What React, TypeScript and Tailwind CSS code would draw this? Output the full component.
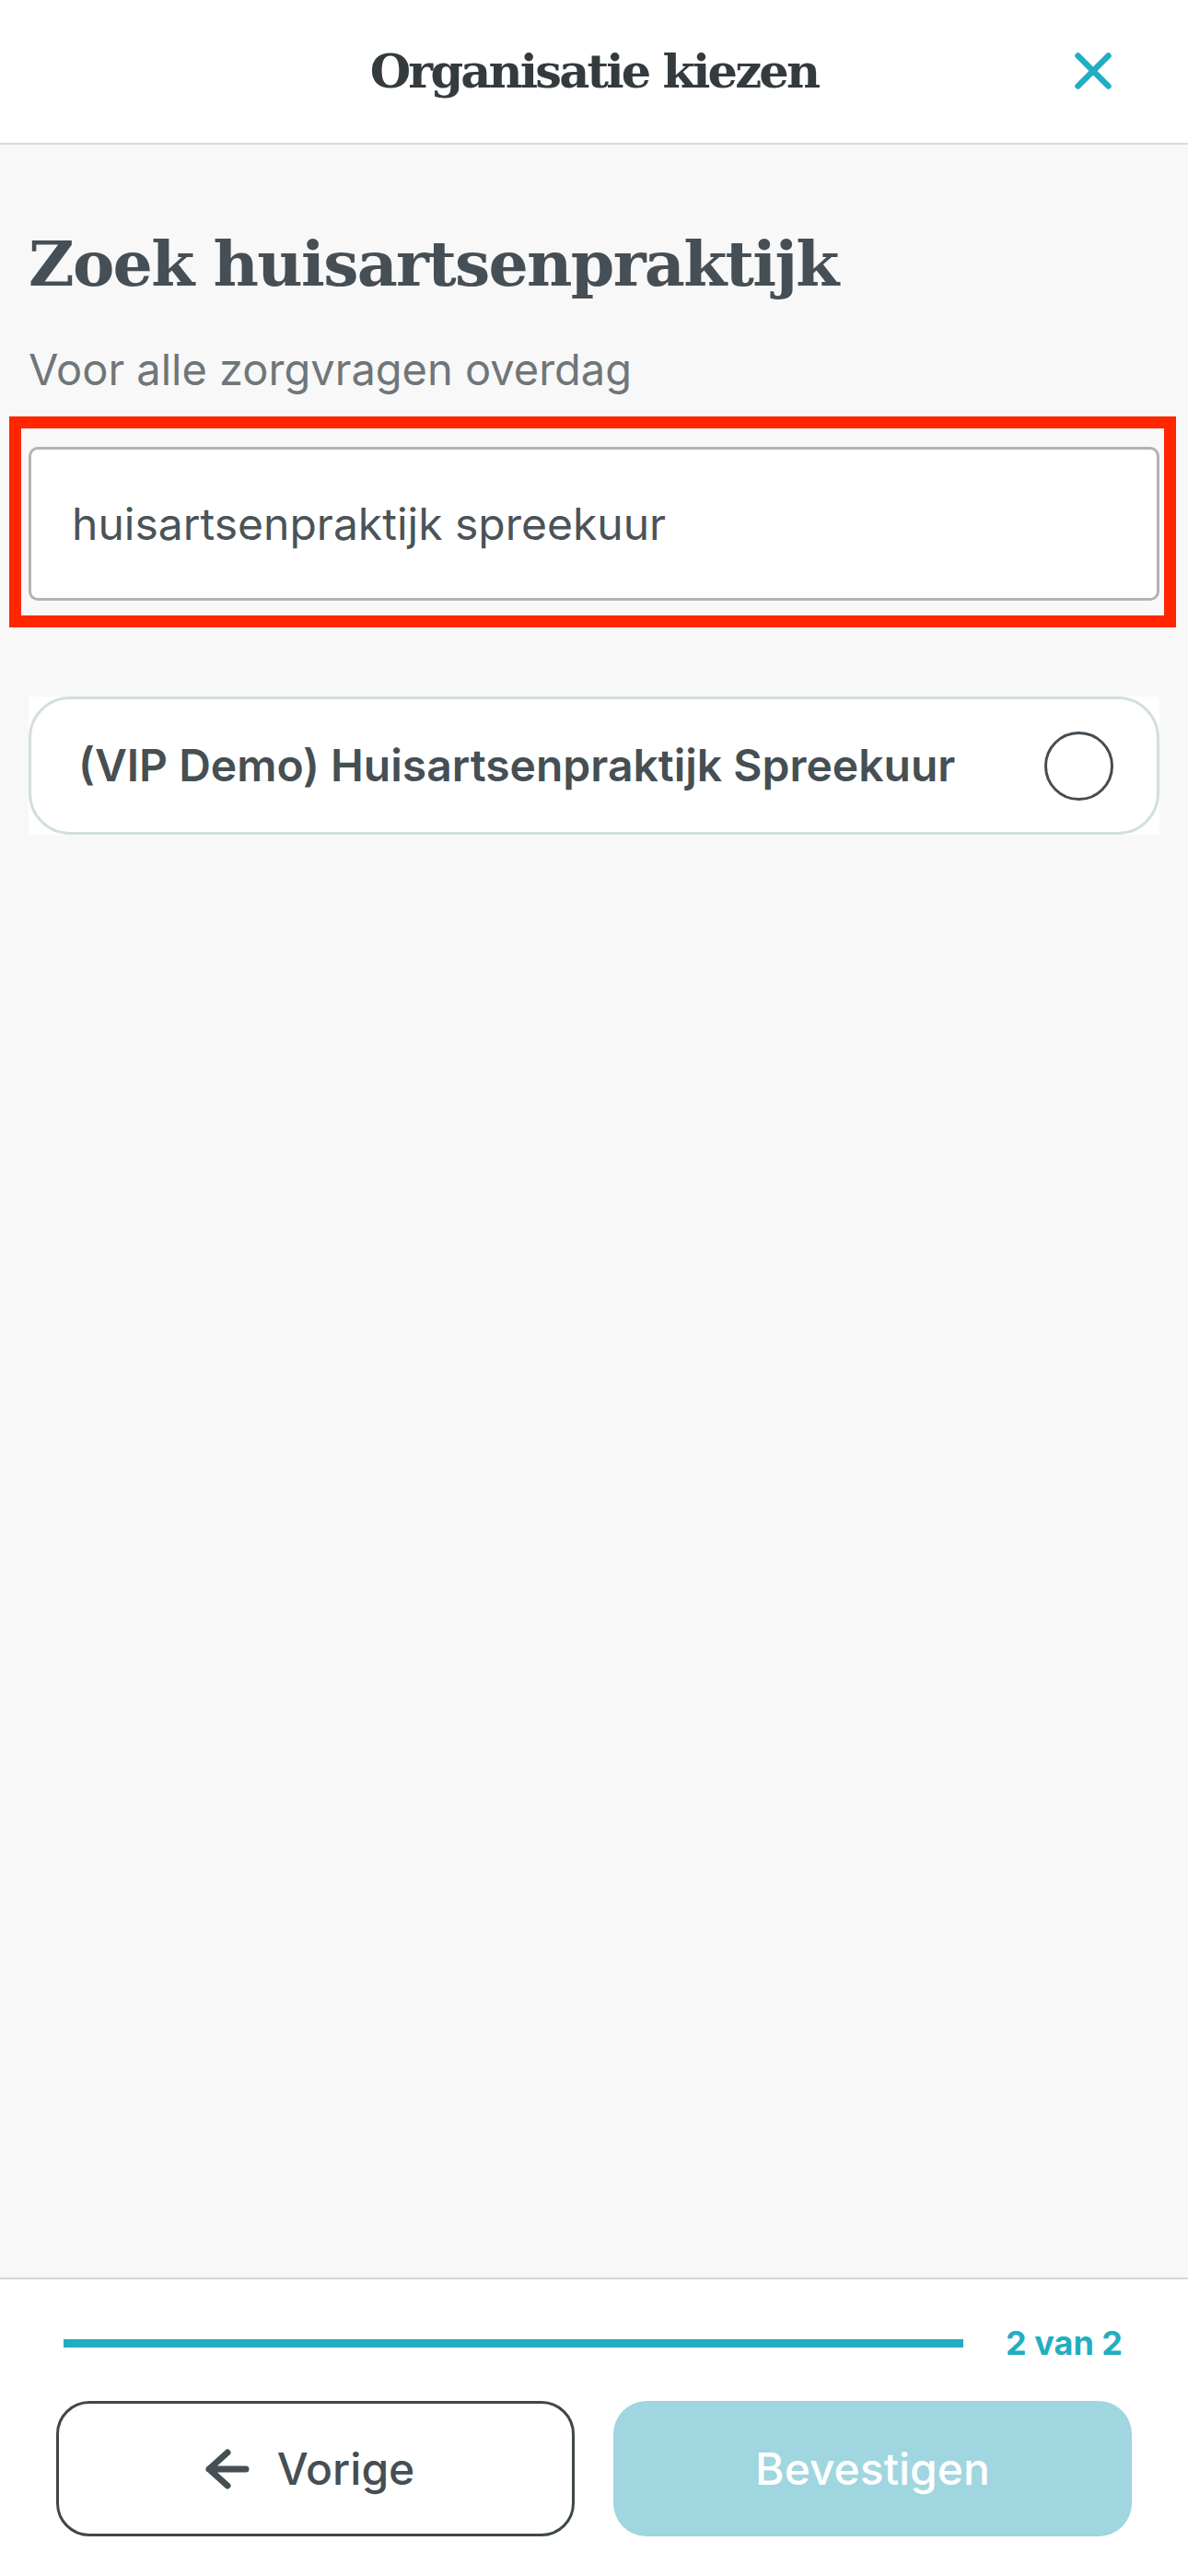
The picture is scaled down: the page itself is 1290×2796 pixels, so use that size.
import React from "react";

const serif = { fontFamily: '"DejaVu Serif", "Liberation Serif", serif' };

export default function App() {
  return (
    <div
      className="h-[2796px] w-full flex flex-col bg-[#f8f8f8] font-['Inter',sans-serif]"
    >
      {/* Header */}
      <header className="h-[157px] shrink-0 bg-white border-b-2 border-[#d9d9d9] grid grid-cols-[1fr_auto_1fr] items-center">
        <div />
        <h1
          style={serif}
          className="text-[51px] leading-[60px] font-bold text-[#343b3f] tracking-[-2.8px] mt-[-2px]"
        >
          Organisatie kiezen
        </h1>
        <div className="flex justify-end pr-[81px]">
          <svg width="44" height="44" viewBox="0 0 44 44" className="mt-[-1px]">
            <line x1="5.5" y1="5.5" x2="38.5" y2="38.5" stroke="#22aec2" strokeWidth="6.5" strokeLinecap="round" />
            <line x1="38.5" y1="5.5" x2="5.5" y2="38.5" stroke="#22aec2" strokeWidth="6.5" strokeLinecap="round" />
          </svg>
        </div>
      </header>

      {/* Main */}
      <main className="flex-1 px-[31px] flex flex-col">
        <h2
          style={serif}
          className="mt-[84px] text-[68px] leading-[90px] font-bold text-[#454f55] tracking-[-1.7px]"
        >
          Zoek huisartsenpraktijk
        </h2>
        <p className="mt-[40px] text-[47px] leading-[60px] text-[#6f7679]">
          Voor alle zorgvragen overdag
        </p>

        <div className="mt-[21px] ml-[-21px] mr-[-18px] border-[13px] border-[#ff2600] pt-[20px] pb-[16px] pl-[8px] pr-[5px]">
          <div className="h-[167px] bg-white border-[3px] border-[#b3b3b3] rounded-[10px] flex items-center pl-[44px]">
            <span className="text-[48px] leading-[60px] text-[#4a5358]">
              huisartsenpraktijk spreekuur
            </span>
          </div>
        </div>

        <div className="mt-[75px] bg-white">
          <div className="h-[150px] border-[3px] border-[#d3dedf] rounded-[45px] flex items-center justify-between pl-[51px] pr-[47px]">
            <span className="text-[48px] leading-[56px] font-semibold text-[#454f54]">
              (VIP Demo) Huisartsenpraktijk Spreekuur
            </span>
            <span className="w-[75px] h-[75px] rounded-full border-[3.5px] border-[#454d52] shrink-0" />
          </div>
        </div>
      </main>

      {/* Footer */}
      <footer className="shrink-0 bg-white border-t-2 border-[#d6d6d6] pt-[47px] pb-[43px]">
        <div className="h-[44px] flex items-center gap-[46px] pl-[69px] pr-[71px]">
          <div className="flex-1 h-[9px] bg-[#22adc1]" />
          <span className="text-[36px] leading-[44px] font-bold text-[#22adc1]">2 van 2</span>
        </div>
        <div className="mt-[41px] grid grid-cols-2 gap-[42px] px-[61px]">
          <button className="h-[147px] rounded-[36px] border-[3px] border-[#3f474b] bg-white flex items-center justify-center gap-[28px] pr-[14px]">
            <svg width="52" height="48" viewBox="0 0 52 48">
              <path
                d="M26 6 L6 24 L26 42 M6 24 H46"
                fill="none"
                stroke="#454f54"
                strokeWidth="7"
                strokeLinecap="round"
                strokeLinejoin="round"
              />
            </svg>
            <span className="text-[48px] leading-[60px] font-medium text-[#454f54]">Vorige</span>
          </button>
          <button className="h-[147px] rounded-[36px] bg-[#9fd6df] flex items-center justify-center">
            <span className="text-[48px] leading-[60px] font-medium text-white">Bevestigen</span>
          </button>
        </div>
      </footer>
    </div>
  );
}
